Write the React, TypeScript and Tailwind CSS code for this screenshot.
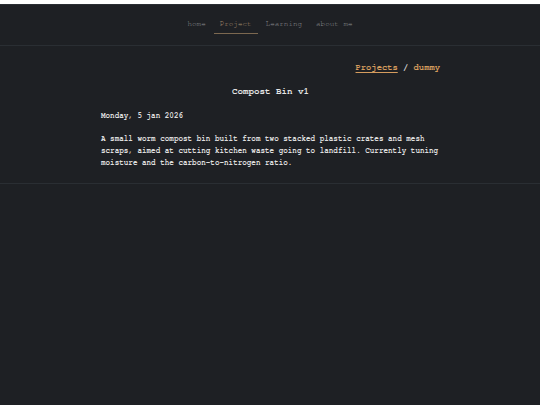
const navItems = ["home", "Project", "Learning", "about me"];

export default function App() {
  return (
    <div
      className="min-h-[405px] bg-[#1e2024] text-[#dedede]"
      style={{ fontFamily: 'FreeMono, "Courier New", monospace' }}
    >
      <header className="mt-[4px] border-t border-b border-[#2a2e33]">
        <nav className="flex h-[40px] items-start justify-center gap-[2px] pt-[14px]">
          {navItems.map((item) => (
            <a
              key={item}
              className={
                item === "Project"
                  ? "border-b border-[#7c6850] px-[6px] pb-[4px] text-[7.6px] leading-[10px] text-[#ab9272]"
                  : "border-b border-transparent px-[6px] pb-[4px] text-[7.6px] leading-[10px] text-[#909295]"
              }
            >
              {item}
            </a>
          ))}
        </nav>
      </header>

      <main className="border-b border-[#2a2e33] pt-[16px] pb-[14px]">
        <div className="mx-auto w-[340px] pl-[1px]">
          <div className="text-right text-[8.8px] font-bold leading-[12px] text-[#d59c5e]">
            <a className="underline underline-offset-2">Projects</a>
            <span className="text-[#cfcfcf]"> / </span>
            <span>dummy</span>
          </div>

          <h1 className="mt-[12px] text-center text-[9.2px] font-bold leading-[12px] text-[#e6e6e6]">
            Compost Bin v1
          </h1>

          <p className="mt-[12px] text-[7.6px] font-bold leading-[12px]">
            Monday, 5 jan 2026
          </p>

          <p className="mt-[11px] text-[7.6px] font-bold leading-[12px]">
            A small worm compost bin built from two stacked plastic crates and
            mesh scraps, aimed at cutting kitchen waste going to landfill.
            Currently tuning moisture and the carbon-to-nitrogen ratio.
          </p>
        </div>
      </main>
    </div>
  );
}
